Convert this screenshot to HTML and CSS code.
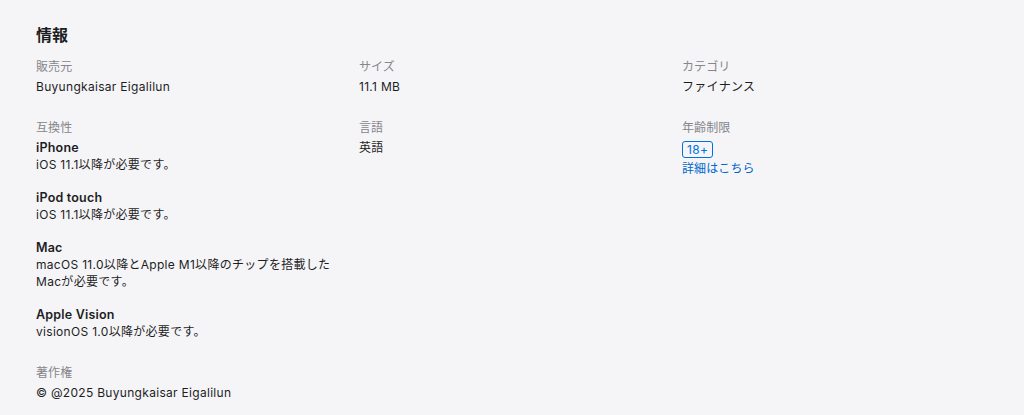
FILE: index.html
```html
<!DOCTYPE html>
<html lang="ja">
<head>
<meta charset="utf-8">
<link rel="stylesheet" href="styles.css">
</head>
<body>
<section class="info">
  <h2 class="title">情報</h2>
  <dl class="grid">
    <div class="item">
      <dt class="label">販売元</dt>
      <dd class="value">Buyungkaisar Eigalilun</dd>
    </div>
    <div class="item">
      <dt class="label">サイズ</dt>
      <dd class="value">11.1 MB</dd>
    </div>
    <div class="item">
      <dt class="label">カテゴリ</dt>
      <dd class="value">ファイナンス</dd>
    </div>
    <div class="item">
      <dt class="label">互換性</dt>
      <dd class="value">
        <div class="device">
          <div class="device-name">iPhone</div>
          <div class="device-req">iOS 11.1以降が必要です。</div>
        </div>
        <div class="device">
          <div class="device-name">iPod touch</div>
          <div class="device-req">iOS 11.1以降が必要です。</div>
        </div>
        <div class="device">
          <div class="device-name">Mac</div>
          <div class="device-req">macOS 11.0以降とApple M1以降のチップを搭載したMacが必要です。</div>
        </div>
        <div class="device">
          <div class="device-name">Apple Vision</div>
          <div class="device-req">visionOS 1.0以降が必要です。</div>
        </div>
      </dd>
    </div>
    <div class="item">
      <dt class="label">言語</dt>
      <dd class="value">英語</dd>
    </div>
    <div class="item">
      <dt class="label">年齢制限</dt>
      <dd class="value">
        <span class="badge">18+</span>
        <a class="link" href="#">詳細はこちら</a>
      </dd>
    </div>
    <div class="item">
      <dt class="label">著作権</dt>
      <dd class="value">© @2025 Buyungkaisar Eigalilun</dd>
    </div>
  </dl>
</section>
</body>
</html>
```
FILE: styles.css
```css
* { box-sizing: border-box; }
html, body {
  margin: 0;
  padding: 0;
  background: #f5f5f7;
}
body {
  font-family: "Inter", "Noto Sans CJK JP", sans-serif;
  color: #1d1d1f;
  font-size: 12px;
  line-height: 17px;
  letter-spacing: 0.3px;
}
.info {
  padding: 24px 36px 0 36px;
}
.title {
  margin: 0 0 12px 0;
  font-size: 16px;
  line-height: 22px;
  font-weight: 700;
  letter-spacing: 0;
}
.grid {
  margin: 0;
  display: grid;
  grid-template-columns: repeat(3, 1fr);
  column-gap: 17px;
  row-gap: 24px;
}
.item {
  min-width: 0;
}
.label {
  color: #86868b;
  margin: 0 0 3px 0;
  letter-spacing: 0.1px;
}
.value {
  margin: 0;
}
.device {
  margin-bottom: 16px;
}
.device:last-child {
  margin-bottom: 0;
}
.device-name {
  font-weight: 600;
  font-size: 12.5px;
  letter-spacing: 0.2px;
}
.device-req {
  max-width: 300px;
}
.badge {
  display: inline-block;
  color: #0071e3;
  border: 1px solid #0071e3;
  border-radius: 3px;
  padding: 0 4px;
  line-height: 15px;
  margin-top: 2px;
}
.link {
  display: block;
  color: #0066cc;
  text-decoration: none;
  margin-top: 2px;
  letter-spacing: 0.1px;
}
```
